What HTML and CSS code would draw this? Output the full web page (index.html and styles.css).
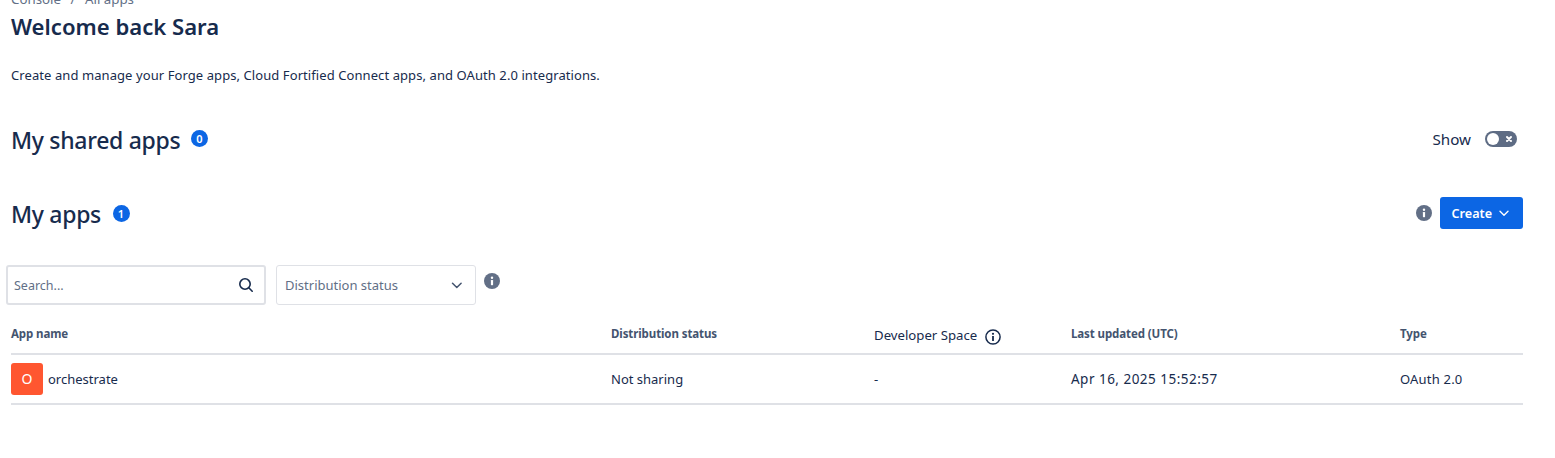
FILE: index.html
```html
<!DOCTYPE html>
<html lang="en">
<head>
<meta charset="utf-8">
<title>Console - All apps</title>
<link rel="stylesheet" href="styles.css">
</head>
<body>
<main class="page">
  <nav class="crumbs"><span>Console</span><span class="sep">/</span><span>All apps</span></nav>
  <h1 class="welcome">Welcome back Sara</h1>
  <p class="intro">Create and manage your Forge apps, Cloud Fortified Connect apps, and OAuth 2.0 integrations.</p>

  <section class="section shared">
    <div class="title-group">
      <h2 class="title">My shared apps</h2>
      <span class="badge">0</span>
    </div>
    <div class="show">
      <span class="show-label">Show</span>
      <span class="toggle">
        <span class="knob"></span>
        <svg class="toggle-x" width="8" height="8" viewBox="0 0 8 8"><path d="M2 2l4 4M6 2l-4 4" stroke="#fff" stroke-width="2" stroke-linecap="round"/></svg>
      </span>
    </div>
  </section>

  <section class="section mine">
    <div class="title-group">
      <h2 class="title">My apps</h2>
      <span class="badge badge-low">1</span>
    </div>
    <div class="actions">
      <svg class="info" width="16" height="16" viewBox="0 0 16 16"><circle cx="8" cy="8" r="8" fill="#626F86"/><circle cx="8" cy="4.7" r="1.2" fill="#fff"/><rect x="6.9" y="7" width="2.2" height="5.2" rx=".6" fill="#fff"/></svg>
      <button class="create">Create
        <svg width="12" height="12" viewBox="0 0 12 12"><path d="M2 4.200l4 4 4-4" fill="none" stroke="#fff" stroke-width="1.400" stroke-linecap="round" stroke-linejoin="round"/></svg>
      </button>
    </div>
  </section>

  <div class="filters">
    <label class="search">
      <input class="search-input" type="text" placeholder="Search...">
      <svg class="search-icon" width="16" height="16" viewBox="0 0 16 16"><circle cx="7" cy="7" r="5.200" fill="none" stroke="#172B4D" stroke-width="1.600"/><path d="M10.800 10.800l3.400 3.400" stroke="#172B4D" stroke-width="1.600" stroke-linecap="round"/></svg>
    </label>
    <div class="select">
      <span>Distribution status</span>
      <svg width="12" height="12" viewBox="0 0 12 12"><path d="M1.500 4.200l4.300 4.300 4.300-4.300" fill="none" stroke="#44546F" stroke-width="1.500" stroke-linecap="round" stroke-linejoin="round"/></svg>
    </div>
    <svg class="info filter-info" width="16" height="16" viewBox="0 0 16 16"><circle cx="8" cy="8" r="8" fill="#626F86"/><circle cx="8" cy="4.700" r="1.200" fill="#fff"/><rect x="6.900" y="7" width="2.200" height="5.200" rx=".6" fill="#fff"/></svg>
  </div>

  <div class="table">
    <div class="row head">
      <span class="th">App name</span>
      <span class="th">Distribution status</span>
      <span class="th-plain">Developer Space
        <svg class="th-icon" width="18" height="18" viewBox="0 0 18 18"><circle cx="9" cy="9" r="7.100" fill="none" stroke="#172B4D" stroke-width="1.500"/><circle cx="9" cy="5.800" r="1.100" fill="#172B4D"/><rect x="8.100" y="8" width="1.800" height="5" fill="#172B4D"/></svg>
      </span>
      <span class="th">Last updated (UTC)</span>
      <span class="th">Type</span>
    </div>
    <div class="row body">
      <span class="app"><span class="avatar">O</span>orchestrate</span>
      <span>Not sharing</span>
      <span>-</span>
      <span class="date">Apr 16, 2025 15:52:57</span>
      <span class="type">OAuth 2.0</span>
    </div>
  </div>
</main>
</body>
</html>
```
FILE: styles.css
```css
* { box-sizing: border-box; }
html, body { margin: 0; padding: 0; height: 100%; overflow: hidden; background: #fff; }
body { font-family: "Noto Sans", "Open Sans", sans-serif; color: #172B4D; font-size: 13px; }
.page { margin-top: -11px; padding: 0 32px 0 11px; }
.crumbs { display: flex; gap: 9.500px; height: 20px; line-height: 20px; color: #626F86; font-size: 13.300px; }
.welcome { margin: 3px 0 0; font-size: 22.100px; line-height: 28px; font-weight: 600; }
.intro { margin: 25px 0 0; line-height: 20px; letter-spacing: .08px; }
.section { display: flex; justify-content: space-between; align-items: center; }
.shared { margin-top: 35px; height: 40px; }
.mine { margin-top: 34px; height: 40px; }
.title-group { display: flex; align-items: center; gap: 10.500px; }
.title { margin: 0; font-size: 23px; line-height: 32px; font-weight: 500; letter-spacing: -.3px; }
.badge { width: 17px; height: 17px; border-radius: 50%; background: #0C66E4; color: #fff; font-size: 11px; line-height: 17px; text-align: center; font-weight: 600; margin-top: -3px; }
.badge-low { margin-top: -1px; margin-left: 1px; }
.show { display: flex; align-items: center; gap: 14px; padding-right: 6px; margin-top: -2px; }
.show-label { font-size: 15.200px; }
.toggle { position: relative; width: 32px; height: 16px; border-radius: 8px; background: #5E6C84; display: block; }
.knob { position: absolute; left: 2px; top: 2px; width: 12px; height: 12px; border-radius: 50%; background: #fff; }
.toggle-x { position: absolute; right: 4px; top: 4px; }
.actions { display: flex; align-items: center; gap: 8px; margin-top: -2px; }
.actions .info { display: block; }
.create { display: flex; align-items: center; gap: 6px; height: 32px; padding: 0 13px 0 12px; border: 0; border-radius: 3px; background: #0C66E4; color: #fff; font: 600 12.600px "Noto Sans", sans-serif; }
.filters { display: flex; align-items: flex-start; margin: 31px 0 0 -5px; }
.search { display: flex; align-items: center; width: 260px; height: 40px; padding: 0 10px 0 6px; border: 2px solid #DFE1E6; border-radius: 3px; }
.search-input { flex: 1; min-width: 0; border: 0; outline: 0; padding: 0; font: 12.500px "Noto Sans", sans-serif; color: #172B4D; }
.search-input::placeholder { color: #626F86; opacity: 1; }
.search-icon { margin-left: -1px; }
.select { display: flex; align-items: center; justify-content: space-between; width: 200px; height: 40px; margin-left: 10px; padding: 0 12px 0 8px; border: 1px solid #DFE1E6; border-radius: 3px; color: #626F86; }
.filter-info { margin: 8px 0 0 8px; }
.table { margin-top: 13px; }
.row { display: grid; grid-template-columns: 600px 263px 197px 329px 1fr; align-items: center; }
.head { height: 37px; border-bottom: 2px solid #DFE1E6; }
.th { font-size: 11.500px; font-weight: 700; color: #44546F; letter-spacing: -.1px; padding-bottom: 4px; }
.th-plain { display: flex; align-items: center; gap: 7px; font-size: 13.200px; padding-bottom: 2px; }
.th-icon { margin-top: 5px; }
.body { height: 50px; border-bottom: 2px solid #DFE1E6; }
.app { display: flex; align-items: center; gap: 5px; }
.avatar { width: 32px; height: 32px; border-radius: 3px; background: #FF5630; color: #fff; font-size: 14px; line-height: 32px; text-align: center; }
.date { font-size: 13.500px; letter-spacing: .48px; }
.type { letter-spacing: .2px; }
```
